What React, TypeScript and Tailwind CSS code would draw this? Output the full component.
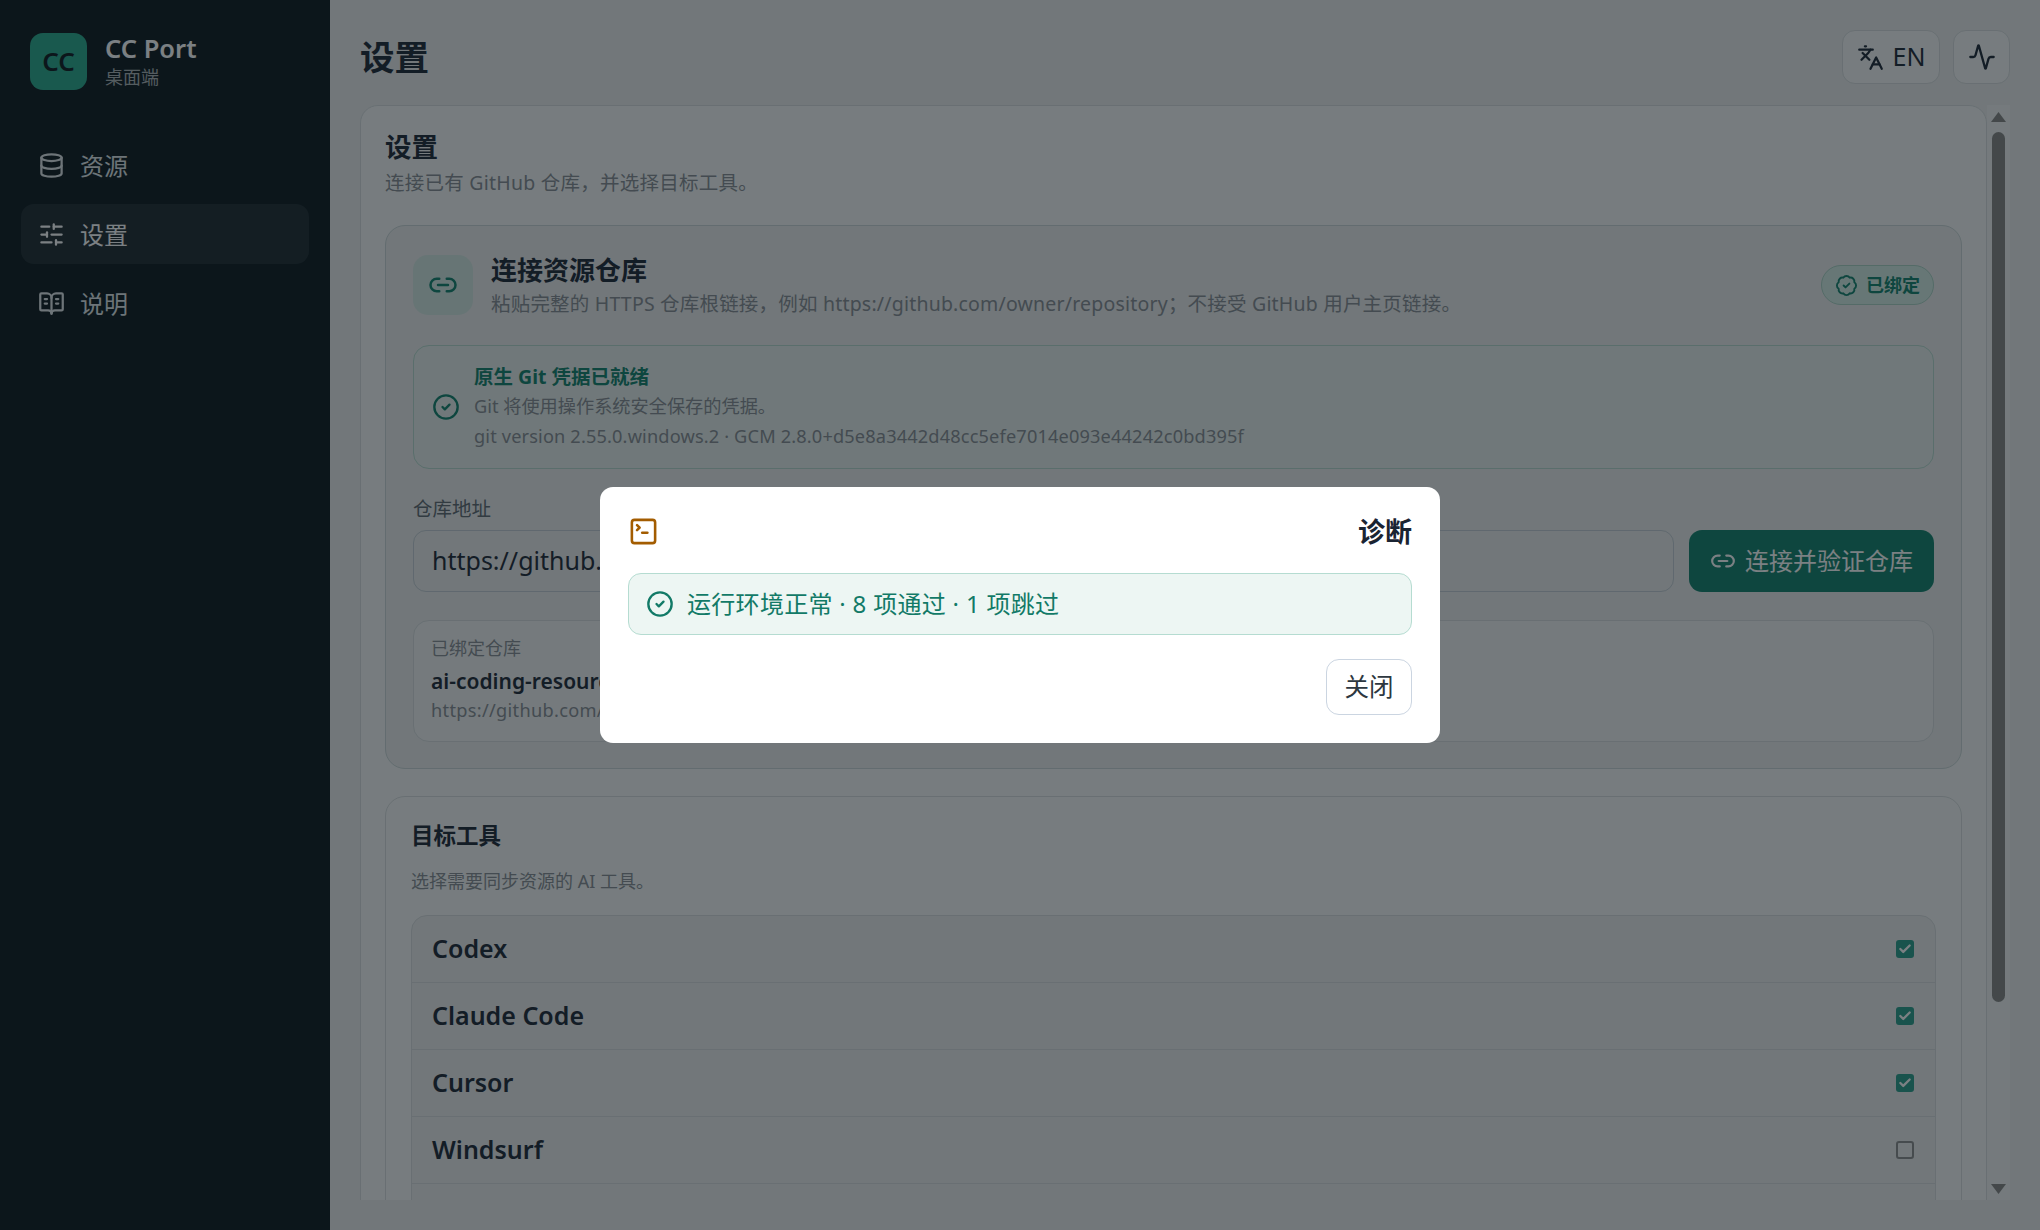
import { Activity, BadgeCheck, BookOpenText, Check, CircleCheck, Database, Languages, Link2, SlidersHorizontal, SquareTerminal } from "lucide-react";

const tools = [
  { name: "Codex", on: true },
  { name: "Claude Code", on: true },
  { name: "Cursor", on: true },
  { name: "Windsurf", on: false },
];

function NavItem({ icon, label, active }: { icon: React.ReactNode; label: string; active?: boolean }) {
  return (
    <div className={`flex h-[60px] items-center gap-[15px] rounded-[13px] pl-[17px] text-[24px] ${active ? "bg-[#1c272c] text-[#ffffff]" : "text-[#dfe4e6]"}`}>
      {icon}
      <span className="pt-[2px]">{label}</span>
    </div>
  );
}

export default function App() {
  return (
    <div className="flex h-screen w-full overflow-hidden bg-[#eaebea] font-['Noto_Sans','Noto_Sans_CJK_SC',sans-serif] text-[#1a2432]">
      <aside className="flex w-[330px] shrink-0 flex-col bg-[#0a1519] px-[21px]">
        <div className="flex items-start gap-[18px] pl-[9px] pt-[33px]">
          <div className="flex h-[57px] w-[57px] items-center justify-center rounded-[13px] bg-[#27a88b] text-[26px] font-semibold text-[#0a1519]">CC</div>
          <div className="flex flex-col">
            <span className="text-[25.5px] font-semibold leading-[30px] text-[#ffffff]">CC Port</span>
            <span className="text-[18px] leading-[29px] text-[#a9afb2]">桌面端</span>
          </div>
        </div>
        <nav className="mt-[43px] flex flex-col gap-[9px]">
          <NavItem icon={<Database size={27} strokeWidth={2} />} label="资源" />
          <NavItem active icon={<SlidersHorizontal size={27} strokeWidth={2} />} label="设置" />
          <NavItem icon={<BookOpenText size={27} strokeWidth={2} />} label="说明" />
        </nav>
      </aside>

      <main className="flex min-w-0 flex-1 flex-col px-[30px] pb-[30px]">
        <header className="flex h-[105px] shrink-0 items-start justify-between pt-[30px]">
          <h1 className="text-[34.5px] font-bold leading-[54px]">设置</h1>
          <div className="flex gap-[13px]">
            <button className="flex h-[54px] w-[98px] items-center justify-center gap-[9px] rounded-[13px] border border-[#d7dadc] bg-[#f6f7f5] text-[25px]">
              <Languages size={27} strokeWidth={2} />
              EN
            </button>
            <button className="flex h-[54px] w-[57px] items-center justify-center rounded-[13px] border border-[#d7dadc] bg-[#f6f7f5]">
              <Activity size={28} strokeWidth={2} />
            </button>
          </div>
        </header>

        <div className="flex min-h-0 flex-1">
          <div className="min-w-0 flex-1 overflow-hidden">
            <section className="rounded-[18px] border border-[#d7dadc] bg-[#f6f7f5] px-[24px] pt-[25px]">
              <h2 className="text-[26.5px] font-bold leading-[32px]">设置</h2>
              <p className="mt-[4px] text-[19.5px] leading-[32px] tracking-[0.24px] text-[#858a90]">连接已有 GitHub 仓库，并选择目标工具。</p>

              <div className="mt-[26px] rounded-[20px] border border-[#c9d3d4] bg-[#eaebea] px-[27px] pb-[26px] pt-[29px]">
                <div className="flex h-[60px] items-center gap-[18px]">
                  <div className="flex h-[60px] w-[60px] shrink-0 items-center justify-center rounded-[15px] bg-[#d3e6e1] text-[#0f7f69]">
                    <Link2 size={30} strokeWidth={2} />
                  </div>
                  <div className="-mt-[2px] min-w-0 flex-1 self-start">
                    <div className="text-[26px] font-bold leading-[34px]">连接资源仓库</div>
                    <div className="text-[19.5px] leading-[34px] tracking-[0.2px] text-[#858a90]">粘贴完整的 HTTPS 仓库根链接，例如 https://github.com/owner/repository；不接受 GitHub 用户主页链接。</div>
                  </div>
                  <div className="flex h-[40px] w-[113px] shrink-0 items-center justify-center gap-[8px] rounded-full border border-[#a8d0c2] bg-[#d3ece2] text-[18px] font-bold text-[#0f7f69]">
                    <BadgeCheck size={23} strokeWidth={2} />
                    已绑定
                  </div>
                </div>

                <div className="mt-[30px] flex h-[124px] items-center gap-[14px] rounded-[16px] border border-[#b5d8cc] bg-[#e6eeea] pl-[18px]">
                  <CircleCheck size={28} strokeWidth={2} className="shrink-0 text-[#0f7f69]" />
                  <div>
                    <div className="text-[19.5px] font-bold leading-[30px] text-[#0f7f69]">原生 Git 凭据已就绪</div>
                    <div className="text-[18.2px] leading-[29px] text-[#858a90]">Git 将使用操作系统安全保存的凭据。</div>
                    <div className="text-[18.2px] leading-[31px] tracking-[0.15px] text-[#858a90]">git version 2.55.0.windows.2 · GCM 2.8.0+d5e8a3442d48cc5efe7014e093e44242c0bd395f</div>
                  </div>
                </div>

                <div className="mt-[25px] text-[19.5px] leading-[30px] text-[#5d666e]">仓库地址</div>
                <div className="mt-[6px] flex gap-[15px]">
                  <input readOnly value="https://github.com/owner/ai-coding-resources" className="h-[62px] min-w-0 flex-1 rounded-[13px] border border-[#c3cbd2] bg-[#eaebea] px-[18px] pb-[2px] text-[25px] outline-none" />
                  <button className="flex h-[62px] w-[245px] shrink-0 items-center justify-center gap-[9px] rounded-[13px] bg-[#0f7f69] text-[24px] text-[#ffffff]">
                    <Link2 size={26} strokeWidth={2} />
                    连接并验证仓库
                  </button>
                </div>

                <div className="mt-[28px] flex h-[122px] flex-col rounded-[16px] border border-[#d7dadc] bg-[#f1f2f1] px-[17px] pt-[13px]">
                  <div className="text-[18px] leading-[28px] text-[#858a90]">已绑定仓库</div>
                  <div className="text-[21px] font-semibold leading-[38px]">ai-coding-resources</div>
                  <div className="text-[18.2px] leading-[20px] tracking-[0.3px] text-[#858a90]">https://github.com/owner/ai-coding-resources</div>
                </div>
              </div>

              <div className="mt-[27px] rounded-[20px] border border-[#d7dadc] bg-[#f6f7f5] px-[25px] pt-[23px]">
                <h3 className="text-[22.5px] font-bold leading-[32px]">目标工具</h3>
                <p className="mt-[16px] text-[18px] leading-[26px] text-[#858a90]">选择需要同步资源的 AI 工具。</p>
                <div className="mt-[21px] rounded-[16px] border border-[#d7dadc] bg-[#eaebea]">
                  {tools.map((t) => (
                    <label key={t.name} className="flex h-[67px] items-center justify-between border-b border-[#d7dadc] pl-[20px] pr-[21px] text-[25px] font-semibold">
                      {t.name}
                      {t.on ? (
                        <span className="flex h-[18px] w-[18px] items-center justify-center rounded-[3px] bg-[#269b87] text-[#ffffff]">
                          <Check size={14} strokeWidth={4} />
                        </span>
                      ) : (
                        <span className="h-[18px] w-[18px] rounded-[3px] border-2 border-[#8a8a8b]" />
                      )}
                    </label>
                  ))}
                  <div className="h-[67px]" />
                </div>
              </div>
            </section>
          </div>

          <div className="flex w-[23px] shrink-0 flex-col items-center bg-[#f1f2f1] pt-[7px]">
            <svg width="15" height="10" viewBox="0 0 15 10" className="shrink-0 fill-[#858482]"><path d="M7.5 0 15 10H0z" /></svg>
            <div className="mt-[10px] h-[870px] w-[13px] shrink-0 rounded-full bg-[#858482]" />
            <div className="mt-auto pb-[6px]">
              <svg width="15" height="10" viewBox="0 0 15 10" className="fill-[#858482]"><path d="M0 0h15L7.5 10z" /></svg>
            </div>
          </div>
        </div>
      </main>

      <div className="fixed inset-0 flex items-center justify-center bg-[rgba(15,23,30,0.55)]">
        <div className="w-[840px] rounded-[13px] bg-[#ffffff] px-[28px] pb-[28px] pt-[28px]">
          <div className="flex h-[32px] items-center justify-between">
            <SquareTerminal size={31} strokeWidth={2} className="text-[#a35c00]" />
            <h4 className="pt-[1px] text-[27px] font-bold leading-[32px]">诊断</h4>
          </div>
          <div className="mt-[26px] flex h-[62px] items-center gap-[13px] rounded-[13px] border border-[#b5dcd1] bg-[#edf6f3] pl-[17px] text-[24px] tracking-[0.3px] text-[#127a67]">
            <CircleCheck size={28} strokeWidth={2} />
            运行环境正常 · 8 项通过 · 1 项跳过
          </div>
          <div className="mt-[24px] flex justify-end">
            <button className="flex h-[56px] w-[86px] items-center justify-center rounded-[13px] border border-[#cbd5e1] bg-[#ffffff] text-[24.5px] text-[#2d3740]">关闭</button>
          </div>
        </div>
      </div>
    </div>
  );
}
